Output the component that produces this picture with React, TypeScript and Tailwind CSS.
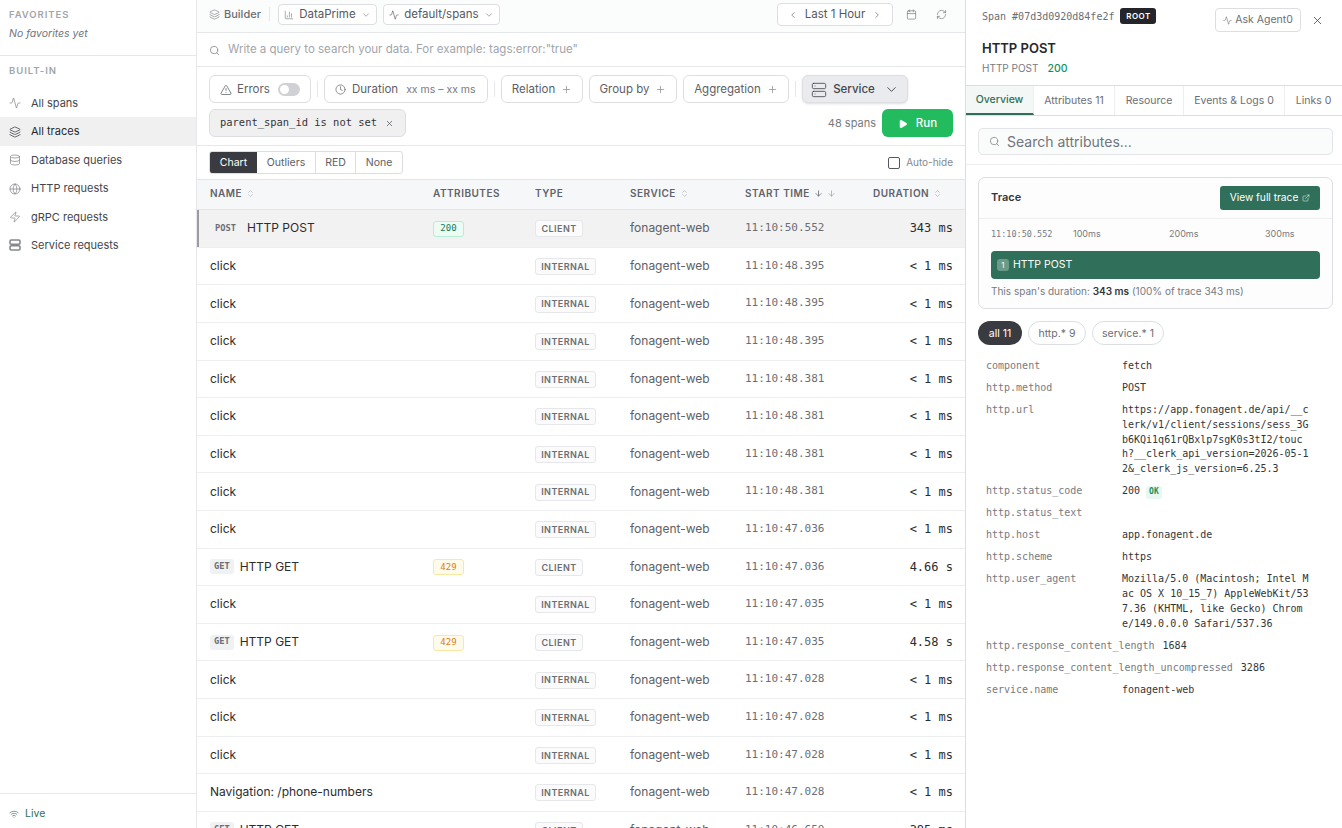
import {
  Activity,
  ArrowDown,
  BarChart3,
  Calendar,
  ChevronDown,
  ChevronLeft,
  ChevronRight,
  ChevronsUpDown,
  Clock,
  Database,
  ExternalLink,
  Globe,
  Layers,
  Play,
  Plus,
  RefreshCw,
  Search,
  Server,
  TriangleAlert,
  Wifi,
  X,
  Zap,
} from "lucide-react";

const sans = "font-['Inter',sans-serif]";
const mono = "font-['DejaVu_Sans_Mono',monospace]";
const gridCols = "grid grid-cols-[223px_102px_95px_115px_128px_105px]";

// thick two-slot server glyph used in the sidebar
function ServerSlots({ className }: { className?: string; strokeWidth?: number }) {
  return (
    <svg viewBox="0 0 12 12" fill="none" stroke="currentColor" strokeWidth="1.6" className={className}>
      <rect x="1" y="1" width="10" height="4.2" rx="1.2" />
      <rect x="1" y="6.8" width="10" height="4.2" rx="1.2" />
    </svg>
  );
}

const navItems = [
  { icon: Activity, label: "All spans", h: "h-[28px]" },
  { icon: Layers, label: "All traces", active: true, h: "h-[29px]" },
  { icon: Database, label: "Database queries", h: "h-[28px]" },
  { icon: Globe, label: "HTTP requests", h: "h-[29px]" },
  { icon: Zap, label: "gRPC requests", h: "h-[28px]" },
  { icon: ServerSlots, label: "Service requests", h: "h-[28px]" },
];

type Row = {
  name: string;
  method?: string;
  status?: string;
  kind: string;
  time: string;
  duration: string;
  selected?: boolean;
};

const click = (time: string): Row => ({ name: "click", kind: "INTERNAL", time, duration: "< 1 ms" });

const rows: Row[] = [
  { name: "HTTP POST", method: "POST", status: "200", kind: "CLIENT", time: "11:10:50.552", duration: "343 ms", selected: true },
  click("11:10:48.395"),
  click("11:10:48.395"),
  click("11:10:48.395"),
  click("11:10:48.381"),
  click("11:10:48.381"),
  click("11:10:48.381"),
  click("11:10:48.381"),
  click("11:10:47.036"),
  { name: "HTTP GET", method: "GET", status: "429", kind: "CLIENT", time: "11:10:47.036", duration: "4.66 s" },
  click("11:10:47.035"),
  { name: "HTTP GET", method: "GET", status: "429", kind: "CLIENT", time: "11:10:47.035", duration: "4.58 s" },
  click("11:10:47.028"),
  click("11:10:47.028"),
  click("11:10:47.028"),
  { name: "Navigation: /phone-numbers", kind: "INTERNAL", time: "11:10:47.028", duration: "< 1 ms" },
  { name: "HTTP GET", method: "GET", kind: "CLIENT", time: "11:10:46.650", duration: "385 ms" },
];

const attributes: { k: string; v: string; ok?: boolean }[] = [
  { k: "component", v: "fetch" },
  { k: "http.method", v: "POST" },
  {
    k: "http.url",
    v: "https://app.fonagent.de/api/__clerk/v1/client/sessions/sess_3Gb6KQi1q61rQBxlp7sgK0s3tI2/touch?__clerk_api_version=2026-05-12&_clerk_js_version=6.25.3",
  },
  { k: "http.status_code", v: "200", ok: true },
  { k: "http.status_text", v: "" },
  { k: "http.host", v: "app.fonagent.de" },
  { k: "http.scheme", v: "https" },
  {
    k: "http.user_agent",
    v: "Mozilla/5.0 (Macintosh; Intel Mac OS X 10_15_7) AppleWebKit/537.36 (KHTML, like Gecko) Chrome/149.0.0.0 Safari/537.36",
  },
  { k: "http.response_content_length", v: "1684" },
  { k: "http.response_content_length_uncompressed", v: "3286" },
  { k: "service.name", v: "fonagent-web" },
];

function Sidebar() {
  return (
    <aside className="w-[197px] shrink-0 border-r border-[#e5e7eb] flex flex-col h-full">
      <div className="h-[56px] border-b border-[#e5e7eb] pl-[9px] pt-[9px]">
        <div className="text-[9.5px] leading-[12px] font-semibold tracking-[0.1em] text-[#a1a5ab]">FAVORITES</div>
        <div className="mt-[6px] text-[10.5px] leading-[13px] italic text-[#71757c]">No favorites yet</div>
      </div>
      <div className="pl-[9px] pt-[9px] text-[9.5px] leading-[12px] font-semibold tracking-[0.1em] text-[#a1a5ab]">BUILT-IN</div>
      <nav className="mt-[12px] flex flex-col">
        {navItems.map((item) => (
          <div
            key={item.label}
            className={`${item.h} flex items-center gap-[10px] pl-[9px] text-[11px] ${item.active ? "bg-[#f0f0f1] text-[#27282c]" : "text-[#44464c]"}`}
          >
            <item.icon className={`w-3 h-3 ${item.active ? "text-[#3a3b40]" : "text-[#85888e]"}`} strokeWidth={1.5} />
            {item.label}
          </div>
        ))}
      </nav>
      <div className="mt-auto h-[35px] border-t border-[#e5e7eb] flex items-center gap-[6px] pl-[9px] pt-[5px] text-[10.5px] text-[#2f6f57]">
        <Wifi className="w-[10px] h-[10px]" strokeWidth={1.5} />
        Live
      </div>
    </aside>
  );
}

function TopBar() {
  return (
    <div className="h-[33px] shrink-0 border-b border-[#e5e7eb] bg-[#fbfdfc] flex items-center pl-[12px] pr-[18px] pb-[4px]">
      <Layers className="w-[11px] h-[11px] text-[#85888e]" strokeWidth={1.5} />
      <span className="ml-[4px] text-[11px] font-medium text-[#6b6e75]">Builder</span>
      <div className="ml-[8px] w-px h-[14px] bg-[#e5e7eb]" />
      <div className="ml-[8px] h-[21px] pt-px w-[99px] border border-[#dcdee2] rounded-[4px] bg-white flex items-center justify-center gap-[5px] text-[11.5px] text-[#55585f]">
        <BarChart3 className="w-[10px] h-[10px] text-[#777a80]" strokeWidth={1.5} />
        DataPrime
        <ChevronDown className="w-[10px] h-[10px] text-[#777a80]" strokeWidth={1.5} />
      </div>
      <div className="ml-[6px] h-[21px] pt-px w-[117px] border border-[#dcdee2] rounded-[4px] bg-white flex items-center justify-center gap-[5px] text-[11.5px] text-[#55585f]">
        <Activity className="w-[10px] h-[10px] text-[#55585f]" strokeWidth={1.5} />
        default/spans
        <ChevronDown className="w-[10px] h-[10px] text-[#777a80]" strokeWidth={1.5} />
      </div>
      <div className="ml-auto h-[23px] pt-px w-[116px] border border-[#dcdee2] rounded-[4px] bg-white flex items-center justify-center gap-[7px] text-[11.5px] text-[#55585f]">
        <ChevronLeft className="w-[10px] h-[10px]" strokeWidth={1.5} />
        Last 1 Hour
        <ChevronRight className="w-[10px] h-[10px]" strokeWidth={1.5} />
      </div>
      <Calendar className="ml-[13px] w-[11px] h-[11px] text-[#777a80]" strokeWidth={1.5} />
      <RefreshCw className="ml-[19px] w-[11px] h-[11px] text-[#777a80]" strokeWidth={1.5} />
    </div>
  );
}

function Chip({ label, w }: { label: string; w: string }) {
  return (
    <div className={`${w} h-[28px] pt-px border border-[#dcdee2] rounded-[6px] bg-white flex items-center justify-center gap-[6px] text-[11.5px] text-[#5d6067]`}>
      {label}
      <Plus className="w-[11px] h-[11px] text-[#85888e]" strokeWidth={1.5} />
    </div>
  );
}

function Filters() {
  return (
    <div className="h-[79px] shrink-0 border-b border-[#e5e7eb] px-[12px] pt-[8px]">
      <div className="flex items-center">
        <div className="w-[102px] h-[28px] pt-px border border-[#dcdee2] rounded-[6px] flex items-center pl-[10px] text-[11.5px] text-[#5d6067]">
          <TriangleAlert className="w-[12px] h-[12px] text-[#5d6067]" strokeWidth={1.5} />
          <span className="ml-[5px]">Errors</span>
          <div className="ml-[8px] w-[22px] h-[13px] rounded-full bg-[#cfd1d5] p-[2px]">
            <div className="w-[9px] h-[9px] rounded-full bg-white" />
          </div>
        </div>
        <div className="ml-[6px] w-px h-[16px] bg-[#e5e7eb]" />
        <div className="ml-[6px] w-[164px] h-[28px] pt-px border border-[#dcdee2] rounded-[6px] flex items-center pl-[10px] text-[11.5px] text-[#5d6067]">
          <Clock className="w-[11px] h-[11px] text-[#5d6067]" strokeWidth={1.5} />
          <span className="ml-[6px]">Duration</span>
          <span className="ml-[8px] text-[10.5px] text-[#777a80]">xx ms – xx ms</span>
        </div>
        <div className="ml-[6px] w-px h-[16px] bg-[#e5e7eb]" />
        <div className="ml-[6px] flex gap-[6px]">
          <Chip label="Relation" w="w-[82px]" />
          <Chip label="Group by" w="w-[88px]" />
          <Chip label="Aggregation" w="w-[106px]" />
        </div>
        <div className="ml-[6px] w-px h-[16px] bg-[#e5e7eb]" />
        <div className="ml-[6px] w-[106px] h-[28px] pt-px border border-[#dcdee2] rounded-[6px] bg-[#e9ebee] shadow-sm flex items-center justify-center gap-[6px] text-[11.5px] font-medium text-[#44464c]">
          <Server className="w-[16px] h-[16px]" strokeWidth={1.25} />
          Service
          <ChevronDown className="ml-[3px] w-[15px] h-[15px]" strokeWidth={1.5} />
        </div>
      </div>
      <div className="mt-[6px] flex items-center">
        <div className={`${mono} h-[28px] w-[197px] border border-[#dcdee2] rounded-[6px] bg-[#f0f0f1] flex items-center pl-[10px] gap-[8px] text-[10.45px] text-[#33353a]`}>
          parent_span_id is not set
          <X className="w-[9px] h-[9px] text-[#55585f]" strokeWidth={2} />
        </div>
        <span className="ml-auto pt-px text-[11px] text-[#777a80]">48 spans</span>
        <div className="ml-[6px] w-[71px] h-[28px] pt-px rounded-[6px] bg-[#22bb5e] text-white flex items-center justify-center gap-[8px] text-[11.5px] font-medium">
          <Play className="w-[10px] h-[10px] fill-white" strokeWidth={1.5} />
          Run
        </div>
      </div>
    </div>
  );
}

function ViewTabs() {
  return (
    <div className="h-[33px] shrink-0 flex items-center pl-[12px] pr-[12px]">
      <div className="h-[23px] flex border border-[#dcdee2] rounded-[3px] overflow-hidden text-[10.5px] text-[#5d6067]">
        <div className="w-[47px] bg-[#3a3b40] text-white flex items-center justify-center">Chart</div>
        <div className="w-[59px] border-r border-[#dcdee2] flex items-center justify-center">Outliers</div>
        <div className="w-[40px] border-r border-[#dcdee2] flex items-center justify-center">RED</div>
        <div className="w-[46px] flex items-center justify-center">None</div>
      </div>
      <div className="ml-auto w-[12px] h-[12px] border border-[#55585f] rounded-[2px]" />
      <span className="ml-[6px] text-[10px] text-[#85888e]">Auto-hide</span>
    </div>
  );
}

function HeadCell({ label, sort = true, down }: { label: string; sort?: boolean; down?: boolean }) {
  return (
    <div className="pl-[13px] pb-[2px] flex items-center gap-[4px] text-[10px] font-semibold tracking-[0.05em] text-[#5f636b]">
      {label}
      {down && <ArrowDown className="w-[9px] h-[9px]" strokeWidth={2} />}
      {down && <ArrowDown className="w-[9px] h-[9px] text-[#85888e]" strokeWidth={1.5} />}
      {sort && !down && <ChevronsUpDown className="w-[9px] h-[9px] text-[#a1a5ab]" strokeWidth={1.5} />}
    </div>
  );
}

function SpanRow({ row }: { row: Row }) {
  const isGet = row.method === "GET";
  return (
    <div
      className={`${gridCols} h-[37.6px] shrink-0 items-center border-b border-[#eceef0] ${row.selected ? "bg-[#f2f2f3] shadow-[inset_2px_0_0_#9b9da2]" : ""}`}
    >
      <div className="pl-[13px] flex items-center gap-[6px] text-[12px] text-[#2b2c31]">
        {row.method && (
          <span
            className={`${mono} h-[15px] rounded-[3px] flex items-center text-[8.7px] font-bold text-[#6b6e75] ${isGet ? "px-[4px] bg-[#f0f1f3]" : "px-[5px]"}`}
          >
            {row.method}
          </span>
        )}
        {row.name}
      </div>
      <div className="pl-[13px] flex pt-px">
        {row.status && (
          <span
            className={`${mono} flex items-center justify-center w-[31px] h-[16px] rounded-[3px] border text-[9px] ${
              row.status === "200" ? "border-[#b5eed5] bg-[#ecfbf4] text-[#147a56]" : "border-[#fbe7a3] bg-[#fffbeb] text-[#e07b1a]"
            }`}
          >
            {row.status}
          </span>
        )}
      </div>
      <div className="pl-[13px] flex pt-px">
        <span
          className={`flex items-center justify-center h-[17px] rounded-[3px] border border-[#e5e7eb] bg-[#fbfbfc] text-[9px] font-semibold tracking-[0.05em] text-[#6b6e75] ${row.kind === "CLIENT" ? "w-[48px]" : "w-[61px]"}`}
        >
          {row.kind}
        </span>
      </div>
      <div className="pl-[13px] text-[12px] text-[#5d6067]">fonagent-web</div>
      <div className={`${mono} pl-[13px] text-[11px] text-[#6b6e75]`}>{row.time}</div>
      <div className={`${mono} pr-[12px] text-right text-[12px] text-[#2b2c31]`}>{row.duration}</div>
    </div>
  );
}

function SpansTable() {
  return (
    <div className="flex-1 min-h-0 overflow-hidden flex flex-col">
      <div className={`${gridCols} h-[31.2px] shrink-0 border-y border-[#e2e4e8] bg-[#f6f7f9]`}>
        <HeadCell label="NAME" />
        <HeadCell label="ATTRIBUTES" sort={false} />
        <HeadCell label="TYPE" sort={false} />
        <HeadCell label="SERVICE" />
        <HeadCell label="START TIME" down />
        <HeadCell label="DURATION" />
      </div>
      {rows.map((row, i) => (
        <SpanRow key={i} row={row} />
      ))}
    </div>
  );
}

const detailTabs = [
  { label: "Overview", w: "w-[68px]", active: true },
  { label: "Attributes 11", w: "w-[81px]" },
  { label: "Resource", w: "w-[69px]" },
  { label: "Events & Logs 0", w: "w-[101px]" },
  { label: "Links 0", w: "w-[57px]" },
];

function DetailPanel() {
  return (
    <aside className="w-[376px] shrink-0 h-full overflow-hidden flex flex-col">
      <div className="h-[86px] shrink-0 border-b border-[#dcdee2] pl-[16px] pr-[17px] relative">
        <div className="pt-[8px] flex items-center">
          <span className={`${mono} text-[10px] text-[#6b6e75]`}>Span #07d3d0920d84fe2f</span>
          <span className="ml-[6px] h-[16px] w-[36px] rounded-[3px] bg-[#23252b] text-white text-[8px] font-semibold tracking-[0.06em] flex items-center justify-center">
            ROOT
          </span>
        </div>
        <div className="absolute top-[8px] left-[249px] w-[86px] h-[24px] border border-[#dcdee2] rounded-[4px] flex items-center justify-center gap-[3px] text-[10.5px] text-[#6b6e75]">
          <Activity className="w-[9px] h-[9px]" strokeWidth={1.5} />
          Ask Agent0
        </div>
        <X className="absolute top-[14px] left-[345px] w-[13px] h-[13px] text-[#44464c]" strokeWidth={1.5} />
        <div className="mt-[16px] text-[13px] leading-[17px] font-semibold text-[#27282c]">HTTP POST</div>
        <div className="mt-[4px] text-[10px] leading-[14px] text-[#777a80]">
          HTTP POST
          <span className="ml-[9px] text-[10.5px] font-medium text-[#15915f]">200</span>
        </div>
      </div>
      <div className="h-[30px] shrink-0 border-b border-[#dcdee2] flex text-[10.5px] text-[#6b6e75]">
        {detailTabs.map((t) => (
          <div
            key={t.label}
            className={`${t.w} flex items-center justify-center border-r border-[#eceef0] last:border-r-0 ${t.active ? "bg-[#f3f7f5] text-[#2f6f57] border-b-2 border-b-[#2f6f57] font-medium" : ""}`}
          >
            {t.label}
          </div>
        ))}
      </div>
      <div className="h-[49px] shrink-0 border-b border-[#eceef0] pl-[12px] pr-[9px] pt-[12px]">
        <div className="h-[27px] border border-[#e2e4e8] rounded-[5px] bg-[#fafbfb] flex items-center pl-[10px] gap-[7px] text-[14px] text-[#71757c]">
          <Search className="w-[11px] h-[11px] text-[#71757c]" strokeWidth={1.5} />
          Search attributes...
        </div>
      </div>
      <div className="ml-[12px] mr-[9px] mt-[12px] h-[132px] border border-[#dcdee2] rounded-[7px] bg-[#fdfdfe]">
        <div className="h-[41px] border-b border-[#eceef0] flex items-center justify-between pl-[12px] pr-[12px]">
          <span className="pb-[2px] text-[11px] font-semibold text-[#33353a]">Trace</span>
          <div className="w-[100px] h-[24px] rounded-[3px] bg-[#30705a] text-white text-[10.2px] flex items-center justify-center gap-[4px]">
            View full trace
            <ExternalLink className="w-[8px] h-[8px]" strokeWidth={1.5} />
          </div>
        </div>
        <div className="h-[32px] pb-[2px] flex items-center pl-[12px] text-[9px] text-[#777a80]">
          <span className={`${mono} w-[82px] text-[8.5px]`}>11:10:50.552</span>
          <span className="w-[96px]">100ms</span>
          <span className="w-[96px]">200ms</span>
          <span>300ms</span>
        </div>
        <div className="mx-[12px] h-[28px] rounded-[4px] bg-[#30705a] text-white text-[10.5px] flex items-center pl-[6px] gap-[4px]">
          <span className="w-[12px] h-[12px] rounded-[3px] bg-[#6a9a88] flex items-center justify-center text-[8px]">1</span>
          HTTP POST
        </div>
        <div className="ml-[12px] mt-[6px] text-[10px] leading-[13px] text-[#777a80]">
          This span's duration: <span className="font-semibold text-[#33353a]">343 ms</span> (100% of trace 343 ms)
        </div>
      </div>
      <div className="ml-[12px] mt-[12px] flex gap-[6px] text-[10.5px]">
        <div className="w-[44px] h-[24px] pt-px rounded-full bg-[#3a3b40] text-white flex items-center justify-center">all 11</div>
        <div className="w-[58px] h-[24px] pt-px rounded-full border border-[#dcdee2] text-[#6b6e75] flex items-center justify-center">http.* 9</div>
        <div className="w-[72px] h-[24px] pt-px rounded-full border border-[#dcdee2] text-[#6b6e75] flex items-center justify-center">service.* 1</div>
      </div>
      <div className={`${mono} ml-[20px] mt-[10.5px] flex flex-col text-[10px] leading-[14.8px]`}>
        {attributes.map((a) => (
          <div key={a.k} className="flex py-[3.6px]">
            <div className="min-w-[128px] shrink-0 mr-[8px] h-[14.8px] leading-[14px] text-[#777a80]">{a.k}</div>
            <div className="w-[190px] shrink-0 break-all text-[#33353a] min-h-[14.8px]">
              {a.v}
              {a.ok && (
                <span className="ml-[6px] inline-flex items-center h-[13px] px-[3px] rounded-[3px] bg-[#e8f8f0] text-[8px] font-bold text-[#15915f]">
                  OK
                </span>
              )}
            </div>
          </div>
        ))}
      </div>
    </aside>
  );
}

export default function App() {
  return (
    <div className={`${sans} h-screen w-full flex overflow-hidden bg-white`}>
      <Sidebar />
      <main className="w-[769px] shrink-0 h-full border-r border-[#dcdee2] flex flex-col overflow-hidden">
        <TopBar />
        <div className="h-[34px] pt-px shrink-0 border-b border-[#e5e7eb] flex items-center pl-[12px] gap-[8px] text-[11.5px] text-[#a1a5ab]">
          <Search className="w-[11px] h-[11px] text-[#71757c]" strokeWidth={1.5} />
          Write a query to search your data. For example: tags:error:"true"
        </div>
        <Filters />
        <ViewTabs />
        <SpansTable />
      </main>
      <DetailPanel />
    </div>
  );
}
